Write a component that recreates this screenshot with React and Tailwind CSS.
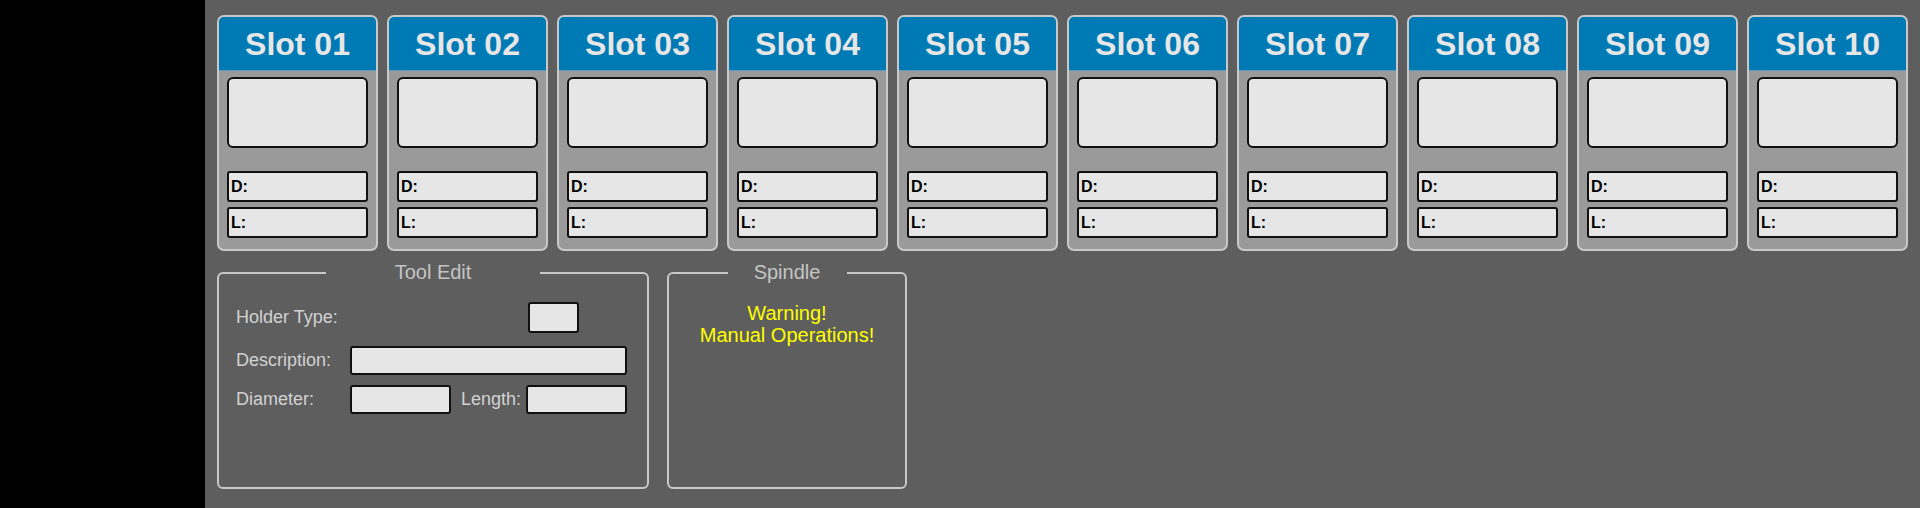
import React from 'react'

const slots = ['01', '02', '03', '04', '05', '06', '07', '08', '09', '10']

function SlotCard({ num }) {
  return (
    <div className="w-[161px] h-[236px] flex-shrink-0 border-2 border-[#c8c8c8] rounded-[7px] bg-[#9a9a9a] overflow-hidden flex flex-col">
      <div className="h-[54px] bg-[#007ab5] border-b border-[#5f9cbb] flex items-center justify-center">
        <span className="text-[32px] font-bold text-[#e6e6e6] leading-none">Slot {num}</span>
      </div>
      <div className="px-[8px] pt-[6px]">
        <div className="h-[71px] border-2 border-[#111] rounded-[6px] bg-[#e6e6e6]" />
        <div className="mt-[23px] h-[31px] border-2 border-[#111] rounded-[3px] bg-[#e6e6e6] flex items-center pl-[2px]">
          <span className="text-[16px] font-bold text-black">D:</span>
        </div>
        <div className="mt-[5px] h-[31px] border-2 border-[#111] rounded-[3px] bg-[#e6e6e6] flex items-center pl-[2px]">
          <span className="text-[16px] font-bold text-black">L:</span>
        </div>
      </div>
    </div>
  )
}

function Field({ className }) {
  return <div className={`border-2 border-[#111] rounded-[3px] bg-[#e6e6e6] ${className}`} />
}

export default function App() {
  return (
    <div className="w-[1920px] h-[508px] flex bg-[#5e5e5e] [font-family:'Liberation_Sans',Arial,sans-serif]">
      <div className="w-[205px] h-full bg-black flex-shrink-0" />
      <div className="flex-1 pt-[15px] pl-[12px]">
        {/* tool slots */}
        <div className="flex gap-[9px]">
          {slots.map(s => <SlotCard key={s} num={s} />)}
        </div>

        <div className="flex gap-[18px] mt-[10px]">
          {/* Tool edit panel */}
          <fieldset className="w-[432px] h-[228px] border-2 border-[#c8c8c8] rounded-[6px]">
            <legend className="mx-auto w-[214px] text-center text-[20px] leading-[23px] text-[#c4c4c4]">Tool Edit</legend>
            <div className="pt-[18px] pl-[17px] text-[18px] text-[#d2d2d2]">
              <div className="flex items-center">
                <span className="w-[292px]">Holder Type:</span>
                <Field className="w-[51px] h-[31px]" />
              </div>
              <div className="flex items-center mt-[13px]">
                <span className="w-[114px]">Description:</span>
                <Field className="w-[277px] h-[29px]" />
              </div>
              <div className="flex items-center mt-[10px]">
                <span className="w-[114px]">Diameter:</span>
                <Field className="w-[101px] h-[29px]" />
                <span className="ml-[10px] w-[65px]">Length:</span>
                <Field className="w-[101px] h-[29px]" />
              </div>
            </div>
          </fieldset>

          {/* Spindle panel */}
          <fieldset className="w-[240px] h-[228px] border-2 border-[#c8c8c8] rounded-[6px]">
            <legend className="mx-auto w-[119px] text-center text-[20px] leading-[23px] text-[#c4c4c4]">Spindle</legend>
            <div className="pt-[18px] text-center text-[20px] leading-[22px] text-[#ffff00]">
              <div>Warning!</div>
              <div>Manual Operations!</div>
            </div>
          </fieldset>
        </div>
      </div>
    </div>
  )
}
